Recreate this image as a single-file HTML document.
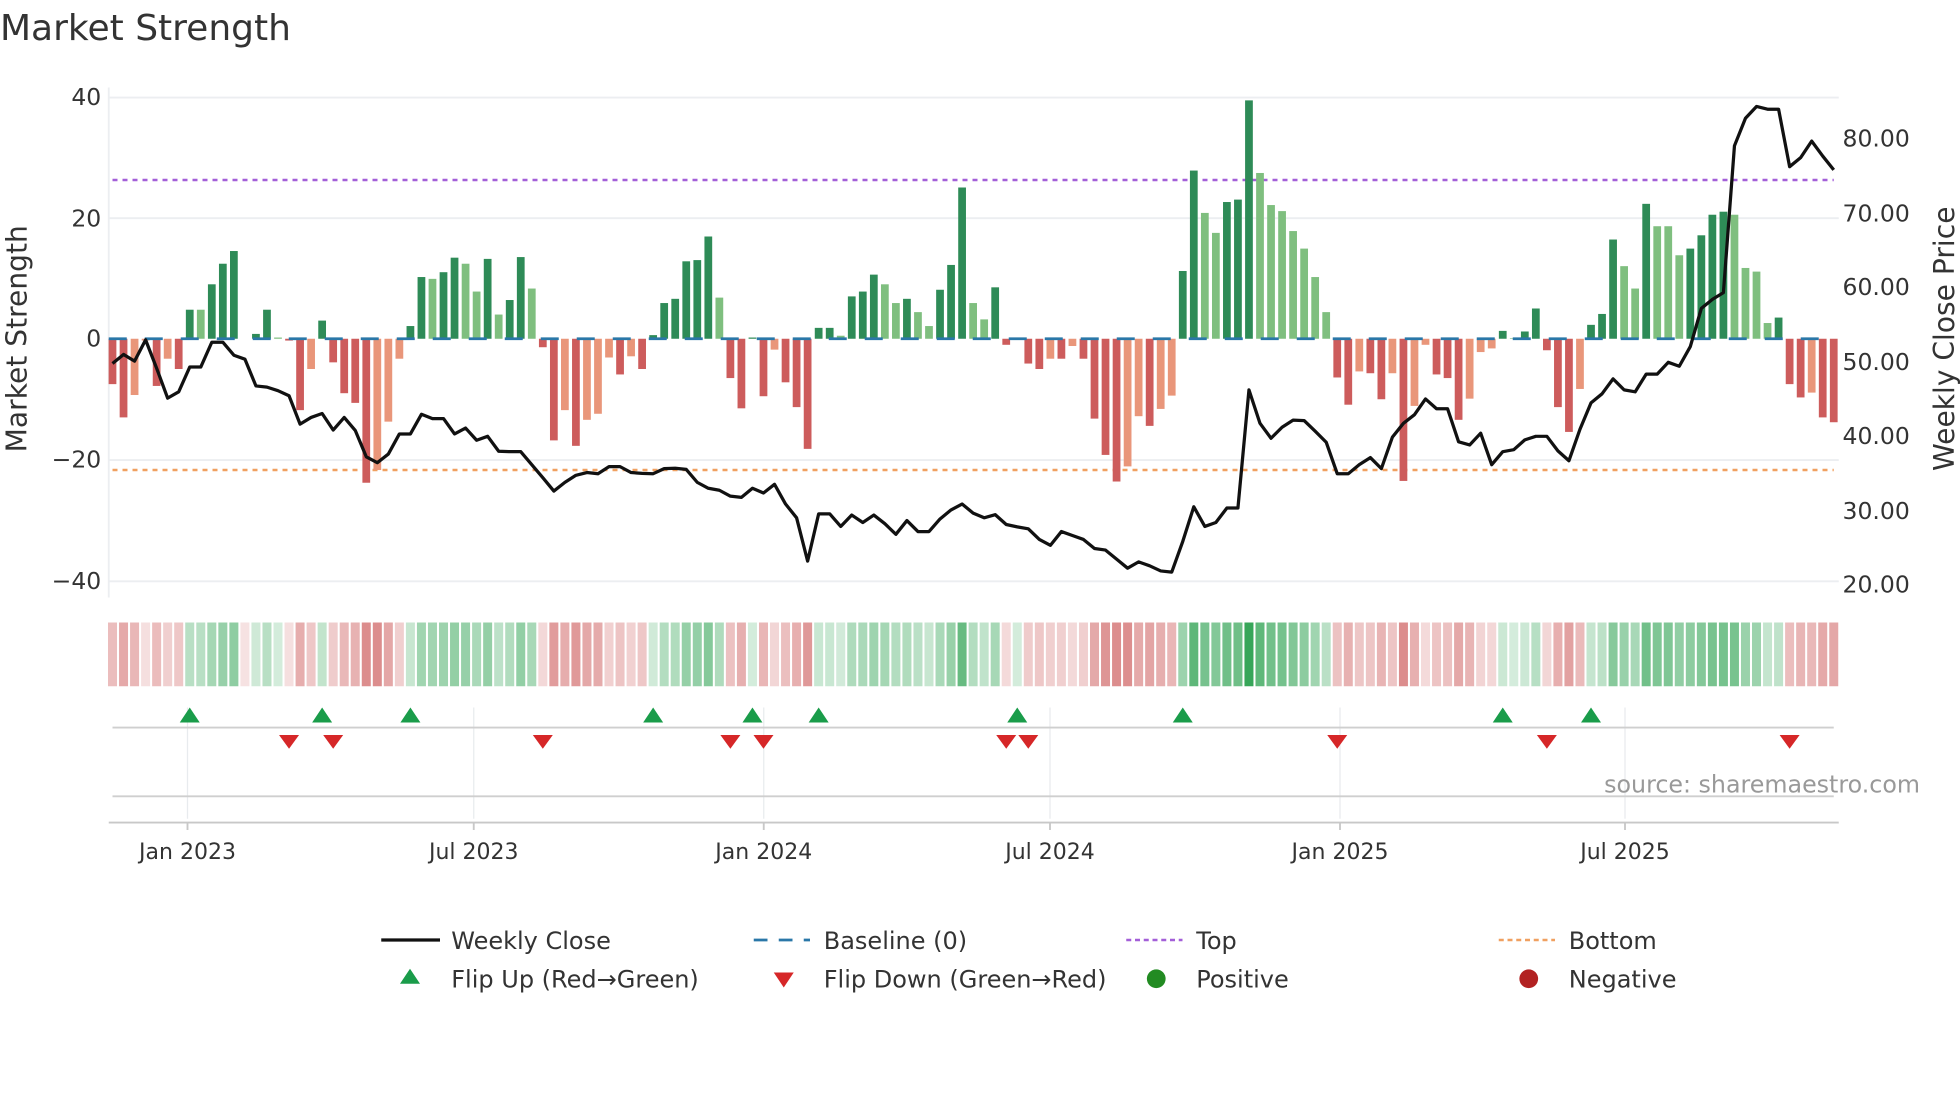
<!DOCTYPE html>
<html><head><meta charset="utf-8"><style>
html,body{margin:0;padding:0;background:#fff;}
svg{display:block;font-family:"DejaVu Sans","Liberation Sans",sans-serif;}
</style></head><body>
<svg id="s" xmlns="http://www.w3.org/2000/svg" width="1960" height="1102" viewBox="0 0 1568 881.6">
<rect width="1568" height="882" fill="#fff"/>
<text x="0" y="32" font-size="28.8" fill="#333">Market Strength</text>
<g id="grid" stroke="#eceef1" stroke-width="1.5">
<line x1="87" y1="78" x2="1471" y2="78"/><line x1="87" y1="174.5" x2="1471" y2="174.5"/>
<line x1="87" y1="368" x2="1471" y2="368"/><line x1="87" y1="465" x2="1471" y2="465"/>
<line x1="87" y1="70" x2="87" y2="478"/>
</g>
<g font-size="18.8" fill="#333" text-anchor="end">
<text x="81" y="84">40</text><text x="81" y="181">20</text><text x="81" y="277">0</text>
<text x="81" y="374">−20</text><text x="81" y="471">−40</text>
</g>
<g font-size="18.8" fill="#333">
<text x="1474" y="117">80.00</text><text x="1474" y="177">70.00</text><text x="1474" y="236">60.00</text>
<text x="1474" y="296">50.00</text><text x="1474" y="355">40.00</text><text x="1474" y="415">30.00</text>
<text x="1474" y="474">20.00</text>
</g>
<text transform="translate(21,271) rotate(-90)" text-anchor="middle" font-size="22.5" fill="#333">Market Strength</text>
<text transform="translate(1563,271) rotate(-90)" text-anchor="middle" font-size="22.5" fill="#333">Weekly Close Price</text>
<line x1="90" y1="144" x2="1467" y2="144" stroke="#a35fd8" stroke-width="2" stroke-dasharray="4 4"/>
<line x1="90" y1="376" x2="1467" y2="376" stroke="#f0a060" stroke-width="2" stroke-dasharray="4 4"/>
<g id="bars"></g>
<line x1="87" y1="271" x2="1467" y2="271" stroke="#2a77a8" stroke-width="2.2" stroke-dasharray="14.4 14.4"/>
<path id="price" fill="none" stroke="#111" stroke-width="2.6" stroke-linejoin="round"/>
<g id="heat"></g>
<g stroke="#e8ebee" stroke-width="1">
<line x1="150" y1="566" x2="150" y2="655"/><line x1="379" y1="566" x2="379" y2="655"/>
<line x1="611" y1="566" x2="611" y2="655"/><line x1="840" y1="566" x2="840" y2="655"/>
<line x1="1072" y1="566" x2="1072" y2="655"/><line x1="1300" y1="566" x2="1300" y2="655"/>
</g>
<line x1="90" y1="582" x2="1467" y2="582" stroke="#cfcfcf" stroke-width="1.5"/>
<line x1="90" y1="637" x2="1467" y2="637" stroke="#cfcfcf" stroke-width="1.5"/>
<line x1="87" y1="658" x2="1471" y2="658" stroke="#c8c8c8" stroke-width="1.5"/>
<g stroke="#c8c8c8" stroke-width="1.5">
<line x1="150" y1="658" x2="150" y2="664"/><line x1="379" y1="658" x2="379" y2="664"/>
<line x1="611" y1="658" x2="611" y2="664"/><line x1="840" y1="658" x2="840" y2="664"/>
<line x1="1072" y1="658" x2="1072" y2="664"/><line x1="1300" y1="658" x2="1300" y2="664"/>
</g>
<g id="marks"></g>
<text x="1536" y="634" text-anchor="end" font-size="19" fill="#999">source: sharemaestro.com</text>
<g font-size="17.6" fill="#333" text-anchor="middle">
<text x="150" y="687">Jan 2023</text><text x="379" y="687">Jul 2023</text><text x="611" y="687">Jan 2024</text>
<text x="840" y="687">Jul 2024</text><text x="1072" y="687">Jan 2025</text><text x="1300" y="687">Jul 2025</text>
</g>
<g font-size="19.2" fill="#333">
<line x1="305" y1="752" x2="352" y2="752" stroke="#111" stroke-width="2.6"/>
<text x="361" y="759">Weekly Close</text>
<line x1="603" y1="752" x2="648" y2="752" stroke="#2a77a8" stroke-width="2.2" stroke-dasharray="11 9"/>
<text x="659" y="759">Baseline (0)</text>
<line x1="901" y1="752" x2="946" y2="752" stroke="#a35fd8" stroke-width="2" stroke-dasharray="4 3"/>
<text x="957" y="759">Top</text>
<line x1="1199" y1="752" x2="1244" y2="752" stroke="#f0a060" stroke-width="2" stroke-dasharray="4 3"/>
<text x="1255" y="759">Bottom</text>
<path d="M328 775 L336 787 L320 787 Z" fill="#1a9c4a"/>
<text x="361" y="790">Flip Up (Red→Green)</text>
<path d="M619 778 L635 778 L627 790 Z" fill="#d62728"/>
<text x="659" y="790">Flip Down (Green→Red)</text>
<circle cx="925" cy="783" r="7.5" fill="#228b22"/>
<text x="957" y="790">Positive</text>
<circle cx="1223" cy="783" r="7.5" fill="#b22222"/>
<text x="1255" y="790">Negative</text>
</g>
</svg>
<script>
(function(){
var NS="http://www.w3.org/2000/svg";
var V="-7.5r,-13r,-9.3o,-0.3o,-7.8r,-3.3o,-5r,4.8d,4.8l,9d,12.4d,14.5d,0d,0.8d,4.8d,0.2l,-0.3r,-11.8r,-5o,3d,-3.9r,-9r,-10.6r,-23.8r,-21.7o,-13.7o,-3.3o,2.1d,10.2d,9.9l,11d,13.4d,12.4l,7.8l,13.2d,4l,6.4d,13.5d,8.3l,-1.4r,-16.8r,-11.8o,-17.7r,-13.4o,-12.4o,-3.1o,-5.9r,-2.9o,-5r,0.6d,5.9d,6.6d,12.8d,13d,16.9d,6.8l,-6.5r,-11.5r,0.2d,-9.5r,-1.8o,-7.2r,-11.3r,-18.2r,1.8d,1.8d,0.5l,7d,7.8d,10.6d,9l,5.9l,6.6d,4.4l,2.1l,8.1d,12.2d,25d,5.9l,3.2l,8.5d,-1r,0.2d,-4.1r,-5r,-3.3o,-3.3r,-1.2o,-3.3r,-13.2r,-19.2r,-23.6r,-21.1o,-12.8o,-14.4r,-11.6o,-9.4o,11.2d,27.8d,20.8l,17.5l,22.6d,23d,39.4d,27.4l,22.1l,21.1l,17.8l,14.9l,10.2l,4.4l,-6.4r,-10.9r,-5.4o,-5.7r,-10r,-5.7o,-23.5r,-11.1o,-1o,-5.9r,-6.5r,-13.4r,-9.9o,-2.2o,-1.6o,1.3d,0.1l,1.2d,5d,-1.9r,-11.3r,-15.4r,-8.3o,2.3d,4.1d,16.4d,12l,8.3l,22.3d,18.6l,18.6l,13.8l,14.9d,17.1d,20.5d,21d,20.5l,11.7l,11.1l,2.6l,3.5d,-7.5r,-9.7r,-8.9o,-13r,-13.8r".split(",");
var P=[718,695,712,658,730,806,790,727,727,664,664,697,707,775,778,787,800,872,855,845,887,855,888,955,970,948,897,897,847,858,858,897,882,913,903,941,942,942,975,1008,1042,1020,1002,995,998,980,980,995,997,998,985,984,987,1020,1035,1040,1055,1058,1035,1047,1025,1075,1110,1220,1100,1100,1132,1103,1122,1103,1125,1152,1117,1145,1145,1113,1090,1075,1098,1110,1102,1127,1133,1138,1165,1180,1145,1155,1165,1188,1192,1215,1238,1222,1232,1245,1248,1170,1082,1132,1122,1085,1085,785,870,908,880,862,863,890,918,998,998,975,957,985,905,870,848,808,833,833,917,925,895,975,942,937,912,903,903,940,965,885,818,795,757,785,790,745,745,715,725,675,578,555,538,165,95,65,72,72,218,195,153,191,226];
var col={d:"#2e8b57",l:"#7fbf7f",r:"#cd5c5c",o:"#e9967a"};
var N=V.length,x0=90,dx=(1467-90)/(N-1);
var bars=document.getElementById("bars"),heat=document.getElementById("heat");
function el(n,a,p){var e=document.createElementNS(NS,n);for(var k in a)e.setAttribute(k,a[k]);p.appendChild(e);return e;}
for(var i=0;i<N;i++){
 var s=V[i],t=s.slice(-1),v=parseFloat(s),x=x0+i*dx;
 var h=Math.abs(v)*4.84,y=v>=0?271-h:271;
 if(h>0.3)el("rect",{x:(x-3.1).toFixed(2),y:y.toFixed(2),width:6.2,height:h.toFixed(2),fill:col[t]},bars);
 var tt=Math.min(Math.abs(v)/40,1),a=0.2+0.78*Math.pow(tt,0.8),c;
 if(v>0){c=[49,163,84];}else{c=[205,92,92];a=Math.min(0.18+0.85*Math.pow(tt,0.8),0.7);}
 var r=Math.round(255-(255-c[0])*a),g=Math.round(255-(255-c[1])*a),b=Math.round(255-(255-c[2])*a);
 el("rect",{x:(x-3.6).toFixed(2),y:498,width:7.2,height:51,fill:"rgb("+r+","+g+","+b+")"},heat);
}
var d="";
for(var j=0;j<P.length&&j<N;j++){d+=(j?"L":"M")+(x0+j*dx).toFixed(2)+" "+(64.7+P[j]*0.3149).toFixed(2);}
document.getElementById("price").setAttribute("d",d);
var m=document.getElementById("marks");
[7,19,27,49,58,64,82,97,126,134].forEach(function(i){var x=x0+i*dx;el("path",{d:"M"+x+" 566 L"+(x+8)+" 578 L"+(x-8)+" 578 Z",fill:"#1a9c4a"},m);});
[16,20,39,56,59,81,83,111,130,152].forEach(function(i){var x=x0+i*dx;el("path",{d:"M"+(x-8)+" 588 L"+(x+8)+" 588 L"+x+" 599 Z",fill:"#d62728"},m);});
})();
</script>
</body></html>
